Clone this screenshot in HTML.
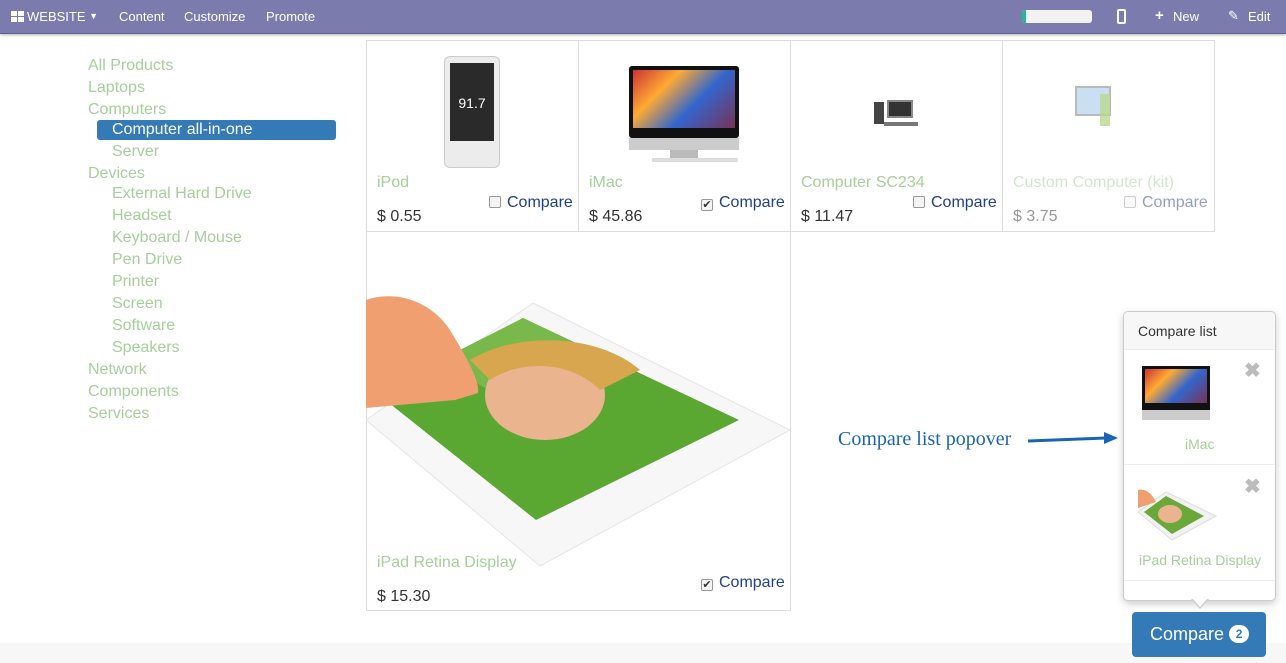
<!DOCTYPE html>
<html><head><meta charset="utf-8"><style>
*{box-sizing:border-box;margin:0;padding:0}
body{width:1286px;height:663px;overflow:hidden;background:#fff;font-family:"Liberation Sans",sans-serif;position:relative;color:#333}
.nav{position:absolute;left:0;top:0;width:1286px;height:34px;background:#7c7bad;border-bottom:1px solid #5f5e97;box-shadow:0 1px 3px rgba(0,0,0,.3);color:#fff;font-size:13px}
.nav span{position:absolute;top:9px}
.a{position:absolute;font-size:16px;color:#a4d09a;white-space:nowrap}
.cell{position:absolute;border:1px solid #ddd}
.pn{position:absolute;font-size:16px;color:#a4d09a}
.pr{position:absolute;font-size:16px;color:#333}
.cmp{position:absolute;font-size:16px;color:#1f3f8f}
.cb{display:inline-block;width:12px;height:12px;border:1px solid #999;border-radius:2px;background:#f4f4f4;vertical-align:-1px;margin-right:6px;font-size:11px;line-height:10px;text-align:center;color:#333}
</style></head><body>
<div class="nav">
<svg style="position:absolute;left:11px;top:11px" width="13" height="11"><rect x="0" y="0" width="6" height="5" fill="#fff"/><rect x="7" y="0" width="6" height="5" fill="#fff"/><rect x="0" y="6" width="6" height="5" fill="#fff"/><rect x="7" y="6" width="6" height="5" fill="#fff"/></svg>
<span style="left:27px">WEBSITE <span style="position:relative;top:-2px;font-size:9px">▼</span></span>
<span style="left:119px">Content</span><span style="left:184px">Customize</span><span style="left:266px">Promote</span>
<div style="position:absolute;left:1022px;top:10px;width:70px;height:13px;background:#f2f2f2;border-radius:3px;overflow:hidden"><div style="width:4px;height:13px;background:#21b799"></div></div>
<div style="position:absolute;left:1117px;top:9px;width:9px;height:15px;border:2px solid #fff;border-radius:2px"></div>
<span style="left:1155px;font-weight:bold;font-size:15px;top:7px">+</span><span style="left:1173px">New</span>
<span style="left:1228px;top:8px">✎</span><span style="left:1248px">Edit</span>
</div>

<div class="a" style="left:88px;top:57px">All Products</div>
<div class="a" style="left:88px;top:79px">Laptops</div>
<div class="a" style="left:88px;top:101px">Computers</div>
<div style="position:absolute;left:97px;top:120px;width:239px;height:20px;background:#337ab7;border-radius:3px"></div>
<div class="a" style="left:112px;top:121px;color:#fff">Computer all-in-one</div>
<div class="a" style="left:112px;top:143px">Server</div>
<div class="a" style="left:88px;top:165px">Devices</div>
<div class="a" style="left:112px;top:185px">External Hard Drive</div>
<div class="a" style="left:112px;top:207px">Headset</div>
<div class="a" style="left:112px;top:229px">Keyboard / Mouse</div>
<div class="a" style="left:112px;top:251px">Pen Drive</div>
<div class="a" style="left:112px;top:273px">Printer</div>
<div class="a" style="left:112px;top:295px">Screen</div>
<div class="a" style="left:112px;top:317px">Software</div>
<div class="a" style="left:112px;top:339px">Speakers</div>
<div class="a" style="left:88px;top:361px">Network</div>
<div class="a" style="left:88px;top:383px">Components</div>
<div class="a" style="left:88px;top:405px">Services</div>

<div class="cell" style="left:366px;top:40px;width:213px;height:192px"></div>
<div class="cell" style="left:578px;top:40px;width:213px;height:192px"></div>
<div class="cell" style="left:790px;top:40px;width:213px;height:192px"></div>
<div class="cell" style="left:1002px;top:40px;width:213px;height:192px"></div>
<div class="cell" style="left:366px;top:231px;width:425px;height:380px"></div>

<!-- ipod -->
<div style="position:absolute;left:444px;top:56px;width:56px;height:112px;background:#ececec;border:1px solid #ccc;border-radius:6px"><div style="margin:6px 5px;height:78px;background:#2a2a2a;color:#fff;font-size:14px;text-align:center;padding-top:32px">91.7</div></div>
<!-- imac -->
<div style="position:absolute;left:629px;top:66px;width:110px;height:72px;background:#111;border-radius:3px;padding:4px"><div style="height:58px;background:linear-gradient(135deg,#c33,#fa3 30%,#36c 60%,#735 100%)"></div></div>
<div style="position:absolute;left:629px;top:138px;width:110px;height:12px;background:#ccc"></div>
<div style="position:absolute;left:670px;top:150px;width:28px;height:8px;background:#bbb"></div>
<div style="position:absolute;left:652px;top:158px;width:86px;height:4px;background:#ddd"></div>
<!-- sc234 -->
<div style="position:absolute;left:874px;top:102px;width:10px;height:22px;background:#444"></div>
<div style="position:absolute;left:887px;top:100px;width:26px;height:18px;background:#333;border:2px solid #888"></div>
<div style="position:absolute;left:884px;top:122px;width:34px;height:4px;background:#777"></div>
<!-- kit -->
<div style="position:absolute;left:1075px;top:86px;width:36px;height:30px;background:#bcd8f0;border:2px solid #aaa;opacity:.8"></div>
<div style="position:absolute;left:1100px;top:94px;width:10px;height:32px;background:#b8d890;opacity:.8"></div>

<div class="pn" style="left:377px;top:174px">iPod</div>
<div class="cmp" style="left:489px;top:194px"><span class="cb"></span>Compare</div>
<div class="pr" style="left:377px;top:208px">$ 0.55</div>
<div class="pn" style="left:589px;top:174px">iMac</div>
<div class="cmp" style="left:701px;top:194px"><span class="cb">✔</span>Compare</div>
<div class="pr" style="left:589px;top:208px">$ 45.86</div>
<div class="pn" style="left:801px;top:174px">Computer SC234</div>
<div class="cmp" style="left:913px;top:194px"><span class="cb"></span>Compare</div>
<div class="pr" style="left:801px;top:208px">$ 11.47</div>
<div class="pn" style="left:1013px;top:174px;opacity:.5">Custom Computer (kit)</div>
<div class="cmp" style="left:1124px;top:194px;opacity:.5"><span class="cb"></span>Compare</div>
<div class="pr" style="left:1013px;top:208px;opacity:.5">$ 3.75</div>

<!-- ipad -->
<svg style="position:absolute;left:366px;top:280px" width="425" height="300" viewBox="366 280 425 300">
<polygon points="366,420 533,303 790,430 540,566" fill="#f7f7f7" stroke="#e6e6e6"/>
<polygon points="389,403 523,318 739,420 536,520" fill="#5aa832"/>
<polygon points="440,360 523,318 610,360 520,410" fill="#79b84a"/>
<ellipse cx="545" cy="395" rx="60" ry="45" fill="#e9b48e"/>
<path d="M470,360 C520,330 600,335 640,370 L600,390 C570,360 520,360 490,380Z" fill="#d9a650"/>
<path d="M366,300 C395,290 430,300 450,330 C465,355 480,380 478,393 L455,400 L366,408 Z" fill="#f0a070"/>
</svg>
<div class="pn" style="left:377px;top:554px">iPad Retina Display</div>
<div class="cmp" style="left:701px;top:574px"><span class="cb">✔</span>Compare</div>
<div class="pr" style="left:377px;top:588px">$ 15.30</div>

<div style="position:absolute;left:838px;top:428px;font-family:'Liberation Serif',serif;font-size:20px;color:#1a64b8">Compare list popover</div>
<svg style="position:absolute;left:1026px;top:430px" width="94" height="18"><line x1="2" y1="11" x2="80" y2="8" stroke="#1a64b8" stroke-width="3"/><polygon points="78,2 92,8 78,14" fill="#1a64b8"/></svg>

<div style="position:absolute;left:0;top:643px;width:1286px;height:20px;background:#f7f7f7"></div>

<div style="position:absolute;left:1123px;top:311px;width:153px;height:290px;background:#fff;border:1px solid #ccc;border-radius:5px;box-shadow:0 3px 8px rgba(0,0,0,.2)">
<div style="height:38px;background:#f7f7f7;border-bottom:1px solid #ebebeb;border-radius:5px 5px 0 0;font-size:14px;padding:11px 14px">Compare list</div>
<div style="position:absolute;left:18px;top:54px;width:68px;height:44px;background:#111;padding:3px"><div style="height:34px;background:linear-gradient(135deg,#c33,#fa3 30%,#36c 60%,#735)"></div></div>
<div style="position:absolute;left:18px;top:98px;width:68px;height:10px;background:#ccc"></div>
<div style="position:absolute;left:120px;top:46px;font-size:20px;color:#bbb;font-weight:bold">✖</div>
<div class="a" style="left:61px;top:124px;font-size:14px">iMac</div>
<div style="position:absolute;left:0;top:152px;width:151px;border-top:1px solid #eee"></div>
<svg style="position:absolute;left:14px;top:172px" width="80" height="60"><polygon points="0,28 28,8 78,32 34,56" fill="#f2f2f2" stroke="#ddd"/><polygon points="6,28 28,12 66,32 34,50" fill="#6aa83a"/><ellipse cx="32" cy="30" rx="12" ry="9" fill="#e9b48e"/><path d="M0,6 C8,4 14,10 18,18 L0,24Z" fill="#f0a070"/></svg>
<div style="position:absolute;left:120px;top:162px;font-size:20px;color:#bbb;font-weight:bold">✖</div>
<div class="a" style="left:15px;top:240px;font-size:14px">iPad Retina Display</div>
<div style="position:absolute;left:0;top:268px;width:151px;border-top:1px solid #eee"></div>
</div>
<div style="position:absolute;left:1191px;top:599px;width:0;height:0;border-left:9px solid transparent;border-right:9px solid transparent;border-top:10px solid #ccc"></div>
<div style="position:absolute;left:1192px;top:598px;width:0;height:0;border-left:8px solid transparent;border-right:8px solid transparent;border-top:9px solid #fff"></div>

<div style="position:absolute;left:1132px;top:612px;width:134px;height:45px;background:#337ab7;border-radius:4px;color:#fff;font-size:18px;padding:12px 0 0 18px">Compare <span style="display:inline-block;width:20px;height:18px;border-radius:9px;background:#fff;color:#337ab7;font-size:12px;font-weight:bold;text-align:center;line-height:18px;vertical-align:2px">2</span></div>
</body></html>
